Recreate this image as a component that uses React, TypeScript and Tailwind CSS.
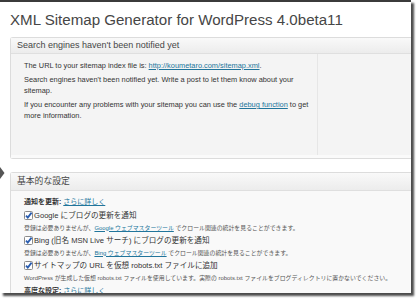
const sans = "font-['Liberation_Sans','Noto_Sans_CJK_JP',sans-serif]"

function Check() {
    return (
        <svg width="9" height="9" viewBox="0 0 9 9" className="shrink-0">
            <rect x="0.5" y="0.5" width="8" height="8" rx="1" fill="#fff" stroke="#8a8a8a" />
            <path d="M2 4.6 L3.8 6.6 L7.6 1.6" fill="none" stroke="#2a5db0" strokeWidth="1.8" />
        </svg>
    )
}

function Link({ children }: { children: React.ReactNode }) {
    return <span className="text-[#21759b] underline">{children}</span>
}

function Option({ label, desc }: { label: React.ReactNode; desc: React.ReactNode }) {
    return (
        <li>
            <div className="flex items-center gap-[1px] h-[12.5px] text-[7.6px] text-[#333]">
                <Check />
                <span>{label}</span>
            </div>
            <p className="h-[12.5px] text-[5.9px] leading-[12px] text-[#555] whitespace-nowrap">{desc}</p>
        </li>
    )
}

export default function App() {
    return (
        <div className={`relative w-[420px] h-[305px] bg-white overflow-hidden ${sans}`}>
            <div className="w-[411px] h-[293px] overflow-hidden bg-white border-t-2 border-[#3b3b3b] shadow-[3px_3px_2px_rgba(0,0,0,0.7)]">
                <h1 className="pl-[10px] pt-[8px] text-[15.1px] leading-[20px] text-[#464646]">
                    XML Sitemap Generator for WordPress 4.0beta11
                </h1>

                <div className="ml-[10px] mt-[7px] border border-r-0 border-[#dcdcdc] rounded-l-[3px] bg-white">
                    <div className="h-[16px] pl-[6px] flex items-center text-[9px] text-[#464646] bg-gradient-to-b from-[#f9f9f9] to-[#ececec] border-b border-[#dfdfdf]">
                        Search engines haven't been notified yet
                    </div>
                    <div className="flex h-[101px] bg-[#f4f4f4]">
                        <div className="w-[306px] pl-[13px] pt-[6px] text-[7.4px] leading-[11px] text-[#333] space-y-[3px]">
                            <p>
                                The URL to your sitemap index file is: <Link>http://koumetaro.com/sitemap.xml</Link>.
                            </p>
                            <p>Search engines haven't been notified yet. Write a post to let them know about your sitemap.</p>
                            <p>
                                If you encounter any problems with your sitemap you can use the <Link>debug function</Link> to get more information.
                            </p>
                        </div>
                        <div className="flex-1 border-l border-[#e6e6e6]" />
                    </div>
                    <div className="h-[3px] bg-[#fafafa]" />
                </div>

                <div className="ml-[10px] mt-[13px] border border-r-0 border-[#dcdcdc] rounded-l-[3px] bg-[#f9f9f9]">
                    <div className="h-[18px] pl-[6px] flex items-center text-[8.8px] text-[#464646] bg-gradient-to-b from-[#f9f9f9] to-[#ececec] border-b border-[#dfdfdf]">
                        基本的な設定
                    </div>
                    <div className="pl-[13px] pt-[5px] pb-[4px]">
                        <p className="text-[7px] leading-[12px] text-[#333]">
                            <b>通知を更新:</b> <Link>さらに詳しく</Link>
                        </p>
                        <ul className="mt-[1px]">
                            <Option
                                label="Google にブログの更新を通知"
                                desc={<>登録は必要ありませんが、<Link>Google ウェブマスターツール</Link> でクロール関連の統計を見ることができます。</>}
                            />
                            <Option
                                label="Bing (旧名 MSN Live サーチ) にブログの更新を通知"
                                desc={<>登録は必要ありませんが、<Link>Bing ウェブマスターツール</Link> でクロール関連の統計を見ることができます。</>}
                            />
                            <Option
                                label="サイトマップの URL を仮想 robots.txt ファイルに追加"
                                desc="WordPress が生成した仮想 robots.txt ファイルを使用しています。実際の robots.txt ファイルをブログディレクトリに置かないでください。"
                            />
                        </ul>
                        <p className="mt-[1px] text-[7px] leading-[12px] text-[#333]">
                            <b>高度な設定:</b> <Link>さらに詳しく</Link>
                        </p>
                    </div>
                </div>
            </div>

            <svg width="5" height="12" viewBox="0 0 5 12" className="absolute left-0 top-[167px]">
                <path d="M0 0 L4.5 6 L0 12 Z" fill="#555" />
            </svg>
        </div>
    )
}
